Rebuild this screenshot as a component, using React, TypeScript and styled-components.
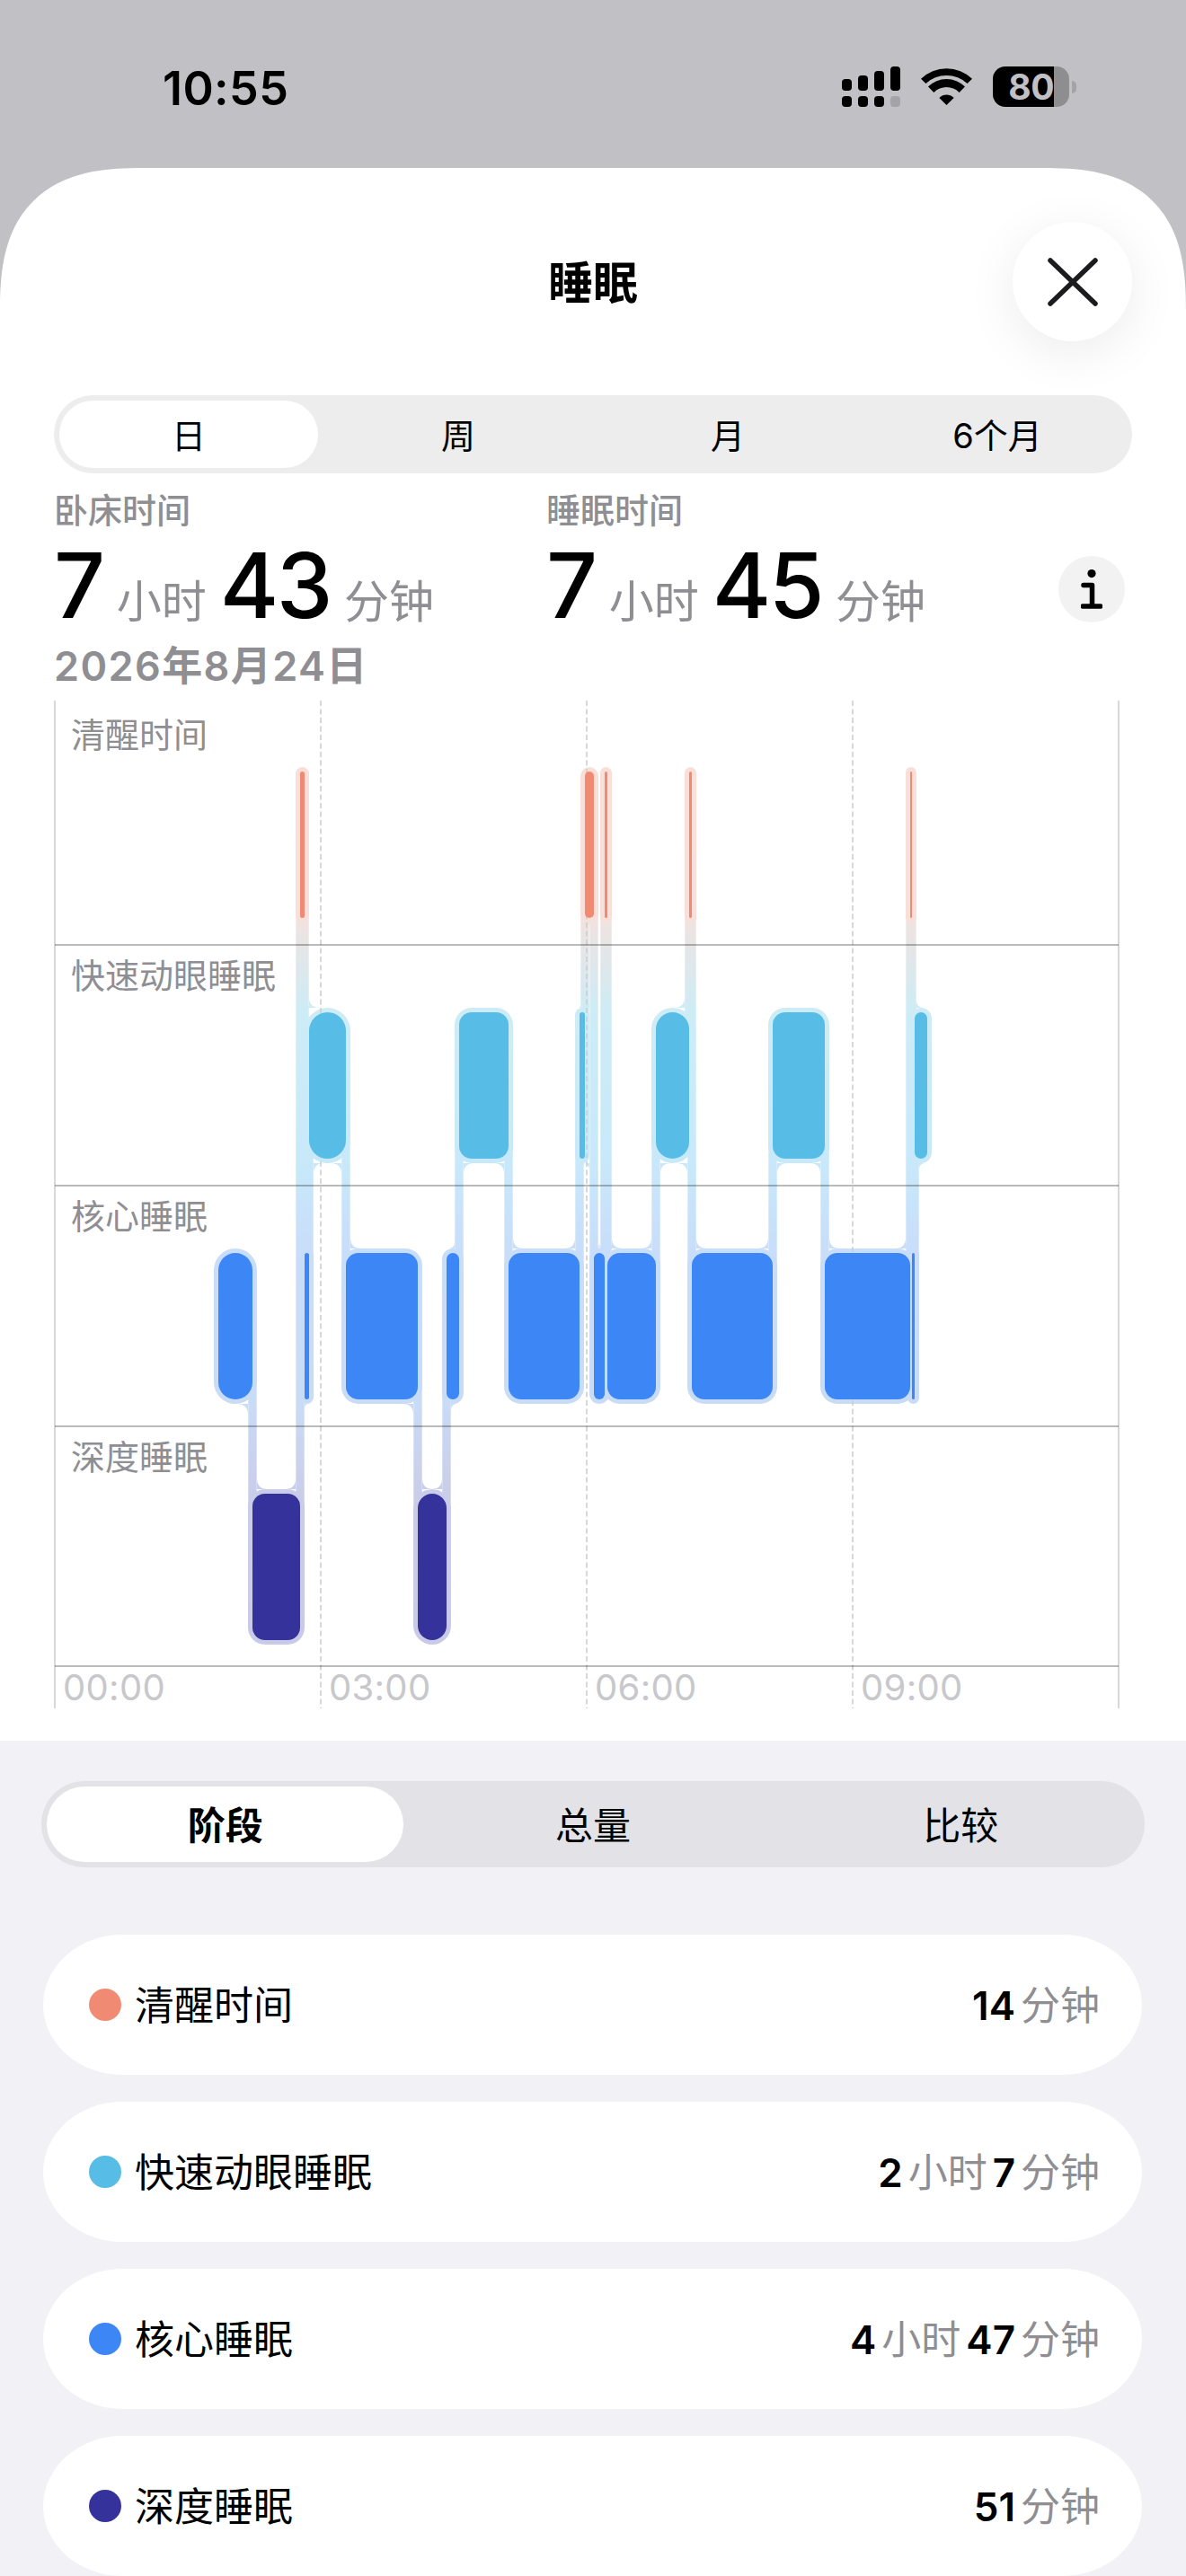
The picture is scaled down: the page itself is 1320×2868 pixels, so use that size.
import React from 'react';
import styled, { createGlobalStyle } from 'styled-components';

const FONT = `Inter, "Noto Sans CJK SC", sans-serif`;

const GlobalStyle = createGlobalStyle`
  html, body {
    margin: 0;
    padding: 0;
    background: #c1c0c5;
  }
  * {
    box-sizing: border-box;
  }
`;

const Page = styled.div`
  width: 1320px;
  height: 2868px;
  overflow: hidden;
  font-family: ${FONT};
  color: #000;
`;

const StatusBar = styled.header`
  height: 187px;
  display: flex;
  justify-content: space-between;
  padding: 74px 122px 0 181px;
`;

const Clock = styled.div`
  font-size: 52px;
  font-weight: 600;
  line-height: 50px;
  letter-spacing: 0.4px;
`;

const StatusIcons = styled.div`
  display: flex;
  align-items: flex-start;
  gap: 23px;
`;

const SignalGrid = styled.div`
  width: 65px;
  height: 45px;
  display: grid;
  grid-template-columns: repeat(4, 11px);
  grid-template-rows: 27px 12px;
  column-gap: 7px;
  row-gap: 6px;
  align-items: end;
`;

const SignalBar = styled.span<{ $height: number; $dim?: boolean }>`
  height: ${({ $height }) => $height}px;
  border-radius: 4px;
  background: ${({ $dim }) => ($dim ? '#a4a3a7' : '#000')};
`;

const Battery = styled.div`
  display: flex;
  align-items: center;
  gap: 3px;
`;

const BatteryBody = styled.div`
  width: 85px;
  height: 45px;
  border-radius: 14px;
  background: linear-gradient(90deg, #000 80%, #8e8d90 80%);
  color: #c1c0c5;
  font-size: 39px;
  font-weight: 700;
  line-height: 45px;
  text-align: right;
  padding-right: 17px;
  letter-spacing: -0.5px;
`;

const BatteryNub = styled.span`
  width: 5px;
  height: 14px;
  border-radius: 0 5px 5px 0;
  background: #a4a3a7;
`;

const Sheet = styled.main`
  position: relative;
  height: 1751px;
  background: #fff;
  border-radius: 160px 160px 0 0;
  corner-shape: superellipse(1.4);
`;

const SheetTitle = styled.h1`
  margin: 0;
  height: 253px;
  padding-top: 98px;
  font-size: 50px;
  font-weight: 600;
  line-height: 60px;
  text-align: center;
`;

const CloseButton = styled.button`
  position: absolute;
  top: 60px;
  right: 60px;
  width: 133px;
  height: 133px;
  padding: 0;
  border: 0;
  border-radius: 50%;
  background: #fff;
  box-shadow: 0 12px 56px rgba(0, 0, 0, 0.08);
  display: flex;
  align-items: center;
  justify-content: center;
`;

const Segmented = styled.div<{ $columns: number; $height: number; $track: string; $inset: number }>`
  display: grid;
  grid-template-columns: repeat(${({ $columns }) => $columns}, 1fr);
  height: ${({ $height }) => $height}px;
  border-radius: ${({ $height }) => $height / 2}px;
  background: ${({ $track }) => $track};
  padding: ${({ $inset }) => $inset}px 0;
`;

const PeriodBar = styled(Segmented)`
  margin: 0 60px;
`;

const ViewBar = styled(Segmented)`
  margin: 0 46px;
`;

const SegmentItem = styled.div<{ $active?: boolean; $size: number; $bold?: boolean }>`
  margin: 0 6px;
  padding-bottom: 3px;
  display: flex;
  align-items: center;
  justify-content: center;
  border-radius: 42px;
  background: ${({ $active }) => ($active ? '#fff' : 'transparent')};
  font-size: ${({ $size }) => $size}px;
  font-weight: ${({ $bold }) => ($bold ? 600 : 400)};
`;

const Stats = styled.section`
  display: grid;
  grid-template-columns: 548px 1fr 74px;
  margin: 16px 68px 0 60px;
`;

const StatLabel = styled.div`
  height: 50px;
  font-size: 38px;
  line-height: 50px;
  font-weight: 500;
  color: #8e8e93;
`;

const StatValue = styled.div`
  display: flex;
  align-items: baseline;
  gap: 15px;
  height: 118px;
  line-height: 118px;
`;

const BigNumber = styled.span`
  font-size: 100px;
  font-weight: 500;
  letter-spacing: -2.5px;
`;

const Unit = styled.span`
  font-size: 50px;
  color: #8e8e93;
`;

const InfoButton = styled.div`
  align-self: end;
  width: 74px;
  height: 74px;
  margin-bottom: 18px;
  border-radius: 50%;
  background: #f2f2f2;
  display: flex;
  align-items: center;
  justify-content: center;
`;

const DateLine = styled.div`
  grid-column: 1 / -1;
  height: 56px;
  margin-top: 3px;
  font-size: 45px;
  font-weight: 600;
  line-height: 56px;
  letter-spacing: 1.4px;
  color: #8e8e93;
`;

const Chart = styled.section`
  position: relative;
  width: 1186px;
  height: 1122px;
  margin: 10px 0 0 60px;
`;

const ChartCanvas = styled.svg`
  position: absolute;
  top: 0;
  left: 0;
`;

const StageRow = styled.div<{ $height: number; $pad: number }>`
  position: relative;
  height: ${({ $height }) => $height}px;
  padding: ${({ $pad }) => $pad}px 0 0 19px;
  font-size: 38px;
  line-height: 44px;
  color: #8e8e93;
`;

const TimeAxis = styled.div`
  position: relative;
  display: grid;
  grid-template-columns: repeat(4, 296px);
  padding-top: 2px;
`;

const TimeLabel = styled.span`
  padding-left: 10px;
  font-size: 40px;
  line-height: 44px;
  letter-spacing: 0.3px;
  color: #c7c7cc;
`;

const Lower = styled.section`
  height: 930px;
  background: #f1f1f6;
  padding-top: 45px;
`;

const StageList = styled.ul`
  list-style: none;
  margin: 75px 49px 0 48px;
  padding: 0;
  display: flex;
  flex-direction: column;
  gap: 30px;
`;

const StageCard = styled.li`
  height: 156px;
  display: flex;
  align-items: center;
  gap: 15px;
  padding: 0 47px 4px 51px;
  border-radius: 88px / 78px;
  background: #fff;
`;

const StageDot = styled.span<{ $color: string }>`
  width: 36px;
  height: 36px;
  margin-top: 4px;
  border-radius: 50%;
  background: ${({ $color }) => $color};
`;

const StageName = styled.span`
  flex: 1;
  font-size: 44px;
`;

const StageValue = styled.span`
  display: flex;
  align-items: baseline;
  gap: 6px;
  font-size: 44px;
`;

const ValueNumber = styled.b`
  font-weight: 600;
`;

const ValueUnit = styled.span`
  color: #8e8e93;
`;

type Stage = 'awake' | 'rem' | 'core' | 'deep';
type Segment = { stage: Stage; from: number; to: number };
type Box = { left: number; right: number; top: number; bottom: number; radius: number };

const STAGE_ROW: Record<Stage, number> = { awake: 0, rem: 1, core: 2, deep: 3 };
const STAGE_COLOR: Record<Stage, string> = {
  awake: '#f08a73',
  rem: '#58bde6',
  core: '#3c86f6',
  deep: '#35339b',
};

const CHART_W = 1184;
const CHART_H = 1122;
const BAR_TOP = 79;
const BAR_H = 163;
const ROW_STEP = 268;
const HALO = 5;
const STRIP = 4.7;
const FILLET = 12;

// x runs in chart pixels, 296px to three hours
const NIGHT: Segment[] = [
  { stage: 'core', from: 182, to: 220 },
  { stage: 'deep', from: 220, to: 273 },
  { stage: 'awake', from: 273, to: 278 },
  { stage: 'core', from: 278, to: 283 },
  { stage: 'rem', from: 283, to: 324 },
  { stage: 'core', from: 324, to: 404 },
  { stage: 'deep', from: 404, to: 436 },
  { stage: 'core', from: 436, to: 450 },
  { stage: 'rem', from: 450, to: 505 },
  { stage: 'core', from: 505, to: 584 },
  { stage: 'rem', from: 584, to: 590 },
  { stage: 'awake', from: 590, to: 600 },
  { stage: 'core', from: 600, to: 612 },
  { stage: 'awake', from: 612, to: 615 },
  { stage: 'core', from: 615, to: 669 },
  { stage: 'rem', from: 669, to: 706 },
  { stage: 'awake', from: 706, to: 709 },
  { stage: 'core', from: 709, to: 799 },
  { stage: 'rem', from: 799, to: 857 },
  { stage: 'core', from: 857, to: 952 },
  { stage: 'awake', from: 952, to: 954 },
  { stage: 'core', from: 954, to: 957 },
  { stage: 'rem', from: 957, to: 971 },
];

const barTop = (stage: Stage) => BAR_TOP + STAGE_ROW[stage] * ROW_STEP;

const cornerRadius = (width: number) => (width < 48 ? width / 2 : 14);

const haloBox = ({ stage, from, to }: Segment): Box => {
  const top = barTop(stage);
  return {
    left: from - HALO,
    right: to + HALO,
    top: top - HALO,
    bottom: top + BAR_H + HALO,
    radius: cornerRadius(to - from) + HALO,
  };
};

// concave corner where a connector meets the edge of a halo
const filletPath = (x: number, y: number, dx: number, dy: number, size: number) =>
  `M${x} ${y}L${x + dx * size} ${y}Q${x} ${y} ${x} ${y + dy * size}Z`;

const buildHalo = () => {
  const boxes = NIGHT.map(haloBox);
  const strips: { x: number; top: number; bottom: number }[] = [];
  for (let i = 1; i < NIGHT.length; i++) {
    const a = barTop(NIGHT[i - 1].stage) + BAR_H / 2;
    const b = barTop(NIGHT[i].stage) + BAR_H / 2;
    strips.push({ x: NIGHT[i].from, top: Math.min(a, b), bottom: Math.max(a, b) });
  }

  const fillets: string[] = [];
  strips.forEach((strip) => {
    const inRange = (y: number) => y > strip.top && y < strip.bottom;
    const rightEdge = strip.x + HALO;
    const leftEdge = strip.x - HALO;
    boxes.forEach((box) => {
      if (box.left <= rightEdge && rightEdge < box.right) {
        const size = Math.min(FILLET, (box.right - rightEdge) / 2);
        if (inRange(box.top)) fillets.push(filletPath(rightEdge, box.top, 1, -1, size));
        if (inRange(box.bottom)) fillets.push(filletPath(rightEdge, box.bottom, 1, 1, size));
      }
      if (box.left < leftEdge && leftEdge <= box.right) {
        const size = Math.min(FILLET, (leftEdge - box.left) / 2);
        if (inRange(box.top)) fillets.push(filletPath(leftEdge, box.top, -1, -1, size));
        if (inRange(box.bottom)) fillets.push(filletPath(leftEdge, box.bottom, -1, 1, size));
      }
    });
  });

  return { boxes, strips, fillets: fillets.join('') };
};

const HALO_STOPS: [number, string][] = [
  [74, '#fadfd9'],
  [244, '#f9dfd9'],
  [247, '#efe3e1'],
  [347, '#cdecf6'],
  [510, '#c8e9fa'],
  [615, '#c8ddf9'],
  [778, '#c9dcf6'],
  [883, '#cacde9'],
  [1050, '#c9cae7'],
];

const SleepCanvas: React.FC = () => {
  const { boxes, strips, fillets } = buildHalo();
  return (
    <ChartCanvas width={CHART_W + 2} height={CHART_H} viewBox={`-1 0 ${CHART_W + 2} ${CHART_H}`}>
      <defs>
        <linearGradient id="halo" gradientUnits="userSpaceOnUse" x1="0" y1="0" x2="0" y2={CHART_H}>
          {HALO_STOPS.map(([y, color]) => (
            <stop key={y} offset={y / CHART_H} stopColor={color} />
          ))}
        </linearGradient>
      </defs>

      <g fill="url(#halo)">
        {boxes.map((box, i) => (
          <rect
            key={i}
            x={box.left}
            y={box.top}
            width={box.right - box.left}
            height={box.bottom - box.top}
            rx={box.radius}
          />
        ))}
        {strips.map((strip, i) => (
          <rect
            key={i}
            x={strip.x - STRIP}
            y={strip.top}
            width={STRIP * 2}
            height={strip.bottom - strip.top}
          />
        ))}
        <path d={fillets} />
      </g>

      <g stroke="#cbcbce" strokeWidth="1.5">
        <line x1="0" y1="0" x2="0" y2={CHART_H} />
        <line x1={CHART_W} y1="0" x2={CHART_W} y2={CHART_H} />
        {[296, 592, 888].map((x) => (
          <line key={x} x1={x} y1="0" x2={x} y2={CHART_H} strokeDasharray="6 3.5" />
        ))}
      </g>
      <g stroke="rgba(0,0,0,0.27)" strokeWidth="2">
        {[272, 540, 808, 1075].map((y) => (
          <line key={y} x1="0" y1={y} x2={CHART_W} y2={y} />
        ))}
      </g>

      {NIGHT.map((seg, i) => {
        const width = seg.to - seg.from;
        return (
          <rect
            key={i}
            x={seg.from}
            y={barTop(seg.stage)}
            width={width}
            height={BAR_H}
            rx={cornerRadius(width)}
            fill={STAGE_COLOR[seg.stage]}
          />
        );
      })}
    </ChartCanvas>
  );
};

const Signal: React.FC = () => (
  <SignalGrid>
    <SignalBar $height={13} />
    <SignalBar $height={17} />
    <SignalBar $height={22} />
    <SignalBar $height={27} />
    <SignalBar $height={12} />
    <SignalBar $height={12} />
    <SignalBar $height={12} />
    <SignalBar $height={12} $dim />
  </SignalGrid>
);

const WifiIcon: React.FC = () => (
  <svg width="57" height="42" viewBox="0 0 57 42" style={{ marginTop: 1 }}>
    <path d="M0 12.7A41 41 0 0 1 57 12.7L51.6 18A34 34 0 0 0 5.4 18Z" />
    <path d="M8 21.5A29 29 0 0 1 49 21.5L42.6 27.9A20 20 0 0 0 14.4 27.9Z" />
    <path d="M20.4 33.9A11.5 11.5 0 0 1 36.6 33.9L28.5 42Z" />
  </svg>
);

const CloseIcon: React.FC = () => (
  <svg width="56" height="54" viewBox="0 0 56 54" fill="none" stroke="#1c1c1e" strokeWidth="5.5" strokeLinecap="round">
    <path d="M3 3L53 51" />
    <path d="M53 3L3 51" />
  </svg>
);

const InfoIcon: React.FC = () => (
  <svg width="24" height="44" viewBox="0 0 24 44">
    <circle cx="12" cy="4.6" r="4.6" />
    <path d="M3 17.5H12.5V41M2 41H22" fill="none" stroke="#000" strokeWidth="5.5" strokeLinecap="round" strokeLinejoin="round" />
  </svg>
);

const PERIODS = ['日', '周', '月', '6个月'];
const VIEWS = ['阶段', '总量', '比较'];
const TIMES = ['00:00', '03:00', '06:00', '09:00'];

const STATS = [
  { label: '卧床时间', hours: '7', minutes: '43' },
  { label: '睡眠时间', hours: '7', minutes: '45' },
];

const ROWS: { name: string; height: number; pad: number }[] = [
  { name: '清醒时间', height: 272, pad: 16 },
  { name: '快速动眼睡眠', height: 268, pad: 12 },
  { name: '核心睡眠', height: 268, pad: 12 },
  { name: '深度睡眠', height: 267, pad: 12 },
];

const TOTALS: { stage: Stage; name: string; parts: [string, string][] }[] = [
  { stage: 'awake', name: '清醒时间', parts: [['14', '分钟']] },
  { stage: 'rem', name: '快速动眼睡眠', parts: [['2', '小时'], ['7', '分钟']] },
  { stage: 'core', name: '核心睡眠', parts: [['4', '小时'], ['47', '分钟']] },
  { stage: 'deep', name: '深度睡眠', parts: [['51', '分钟']] },
];

const App: React.FC = () => (
  <Page>
    <GlobalStyle />
    <StatusBar>
      <Clock>10:55</Clock>
      <StatusIcons>
        <Signal />
        <WifiIcon />
        <Battery>
          <BatteryBody>80</BatteryBody>
          <BatteryNub />
        </Battery>
      </StatusIcons>
    </StatusBar>

    <Sheet>
      <SheetTitle>睡眠</SheetTitle>
      <CloseButton>
        <CloseIcon />
      </CloseButton>

      <PeriodBar $columns={4} $height={87} $track="#ededee" $inset={6}>
        {PERIODS.map((period, i) => (
          <SegmentItem key={period} $active={i === 0} $size={38}>
            {period}
          </SegmentItem>
        ))}
      </PeriodBar>

      <Stats>
        {STATS.map((stat) => (
          <div key={stat.label}>
            <StatLabel>{stat.label}</StatLabel>
            <StatValue>
              <BigNumber>{stat.hours}</BigNumber>
              <Unit>小时</Unit>
              <BigNumber>{stat.minutes}</BigNumber>
              <Unit>分钟</Unit>
            </StatValue>
          </div>
        ))}
        <InfoButton>
          <InfoIcon />
        </InfoButton>
        <DateLine>2026年8月24日</DateLine>
      </Stats>

      <Chart>
        <SleepCanvas />
        {ROWS.map((row) => (
          <StageRow key={row.name} $height={row.height} $pad={row.pad}>
            {row.name}
          </StageRow>
        ))}
        <TimeAxis>
          {TIMES.map((time) => (
            <TimeLabel key={time}>{time}</TimeLabel>
          ))}
        </TimeAxis>
      </Chart>
    </Sheet>

    <Lower>
      <ViewBar $columns={3} $height={96} $track="#e2e2e7" $inset={6}>
        {VIEWS.map((view, i) => (
          <SegmentItem key={view} $active={i === 0} $size={42} $bold={i === 0}>
            {view}
          </SegmentItem>
        ))}
      </ViewBar>

      <StageList>
        {TOTALS.map((item) => (
          <StageCard key={item.stage}>
            <StageDot $color={STAGE_COLOR[item.stage]} />
            <StageName>{item.name}</StageName>
            <StageValue>
              {item.parts.map(([value, unit]) => (
                <React.Fragment key={unit}>
                  <ValueNumber>{value}</ValueNumber>
                  <ValueUnit>{unit}</ValueUnit>
                </React.Fragment>
              ))}
            </StageValue>
          </StageCard>
        ))}
      </StageList>
    </Lower>
  </Page>
);

export default App;
